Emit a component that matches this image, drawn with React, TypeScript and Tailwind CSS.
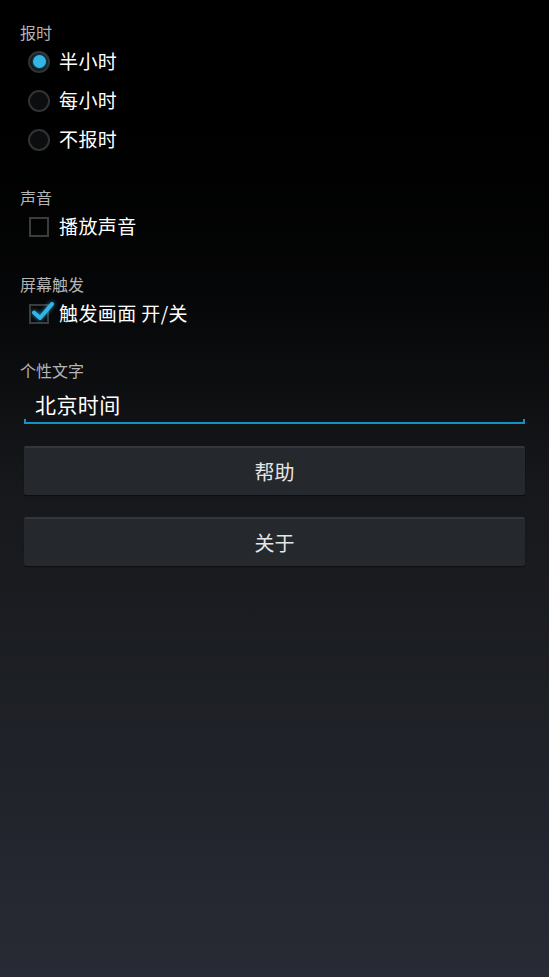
import { useState } from 'react'

const cjk = "font-['Noto_Sans_CJK_SC','Noto_Sans',sans-serif]"

const chimeOptions = ['半小时', '每小时', '不报时'] as const

function SectionLabel({ children }: { children: string }) {
  return (
    <div className="flex h-5 items-center pl-5 text-[16px] leading-none text-[#b4b4b4]">
      {children}
    </div>
  )
}

function Radio({ checked }: { checked: boolean }) {
  return (
    <span className="flex h-[22px] w-[22px] items-center justify-center rounded-full border-2 border-[#303234] bg-[#0c0d0e]">
      {checked && (
        <span className="h-[13px] w-[13px] rounded-full bg-[#33b5e5] shadow-[0_0_4px_rgba(51,181,229,0.7)]" />
      )}
    </span>
  )
}

function Checkbox({ checked }: { checked: boolean }) {
  return (
    <span className="relative flex h-5 w-5 border-2 border-[#3a3c3e]">
      {checked && (
        <svg
          viewBox="0 0 24 24"
          className="absolute -top-[6px] left-0 h-[24px] w-[24px] drop-shadow-[0_0_2px_rgba(51,181,229,0.8)]"
        >
          <path d="M3 12.5 L9 18 L21 4" fill="none" stroke="#33b5e5" strokeWidth="4" strokeLinecap="round" strokeLinejoin="round" />
        </svg>
      )}
    </span>
  )
}

function ActionButton({ label }: { label: string }) {
  return (
    <button
      type="button"
      className="mx-6 flex h-[49px] items-center justify-center rounded-[2px] border-t-2 border-[#33363a] bg-[#25282c] text-[20px] text-[#e6e6e6] shadow-[0_1px_1px_rgba(0,0,0,0.5)]"
    >
      {label}
    </button>
  )
}

export default function App() {
  const [chime, setChime] = useState<(typeof chimeOptions)[number]>('半小时')
  const [sound, setSound] = useState(false)
  const [touch, setTouch] = useState(true)
  const [text, setText] = useState('北京时间')

  return (
    <div
      className={`${cjk} flex h-[977px] w-full flex-col bg-gradient-to-b from-black via-[#16181b] via-50% to-[#282b35] pt-[22px] text-white`}
    >
      <SectionLabel>报时</SectionLabel>
      {chimeOptions.map((option) => (
        <label
          key={option}
          onClick={() => setChime(option)}
          className="flex h-[39px] items-center gap-[9px] pl-7 text-[19px] tracking-[0.4px]"
        >
          <Radio checked={chime === option} />
          <span>{option}</span>
        </label>
      ))}

      <div className="mt-7">
        <SectionLabel>声音</SectionLabel>
      </div>
      <label onClick={() => setSound((v) => !v)} className="flex h-[39px] items-center gap-[10px] pl-[29px] text-[19px] tracking-[0.4px]">
        <Checkbox checked={sound} />
        <span>播放声音</span>
      </label>

      <div className="mt-7">
        <SectionLabel>屏幕触发</SectionLabel>
      </div>
      <label onClick={() => setTouch((v) => !v)} className="flex h-[39px] items-center gap-[10px] pl-[29px] text-[19px] tracking-[0.4px]">
        <Checkbox checked={touch} />
        <span>触发画面 开/关</span>
      </label>

      <div className="mt-[27px]">
        <SectionLabel>个性文字</SectionLabel>
      </div>
      <div className="relative mx-6 mt-[5px] h-[39px]">
        <input
          value={text}
          onChange={(e) => setText(e.target.value)}
          className="h-full w-full bg-transparent pl-[11px] pb-[2px] text-[21px] tracking-[0.4px] text-white outline-none"
        />
        <span className="absolute bottom-0 left-0 right-0 h-[2px] bg-[#1592c4]" />
        <span className="absolute bottom-0 left-0 h-[5px] w-[2px] bg-[#1592c4]" />
        <span className="absolute bottom-0 right-0 h-[5px] w-[2px] bg-[#1592c4]" />
      </div>

      <div className="mt-[22px] flex flex-col gap-[22px]">
        <ActionButton label="帮助" />
        <ActionButton label="关于" />
      </div>
    </div>
  )
}
